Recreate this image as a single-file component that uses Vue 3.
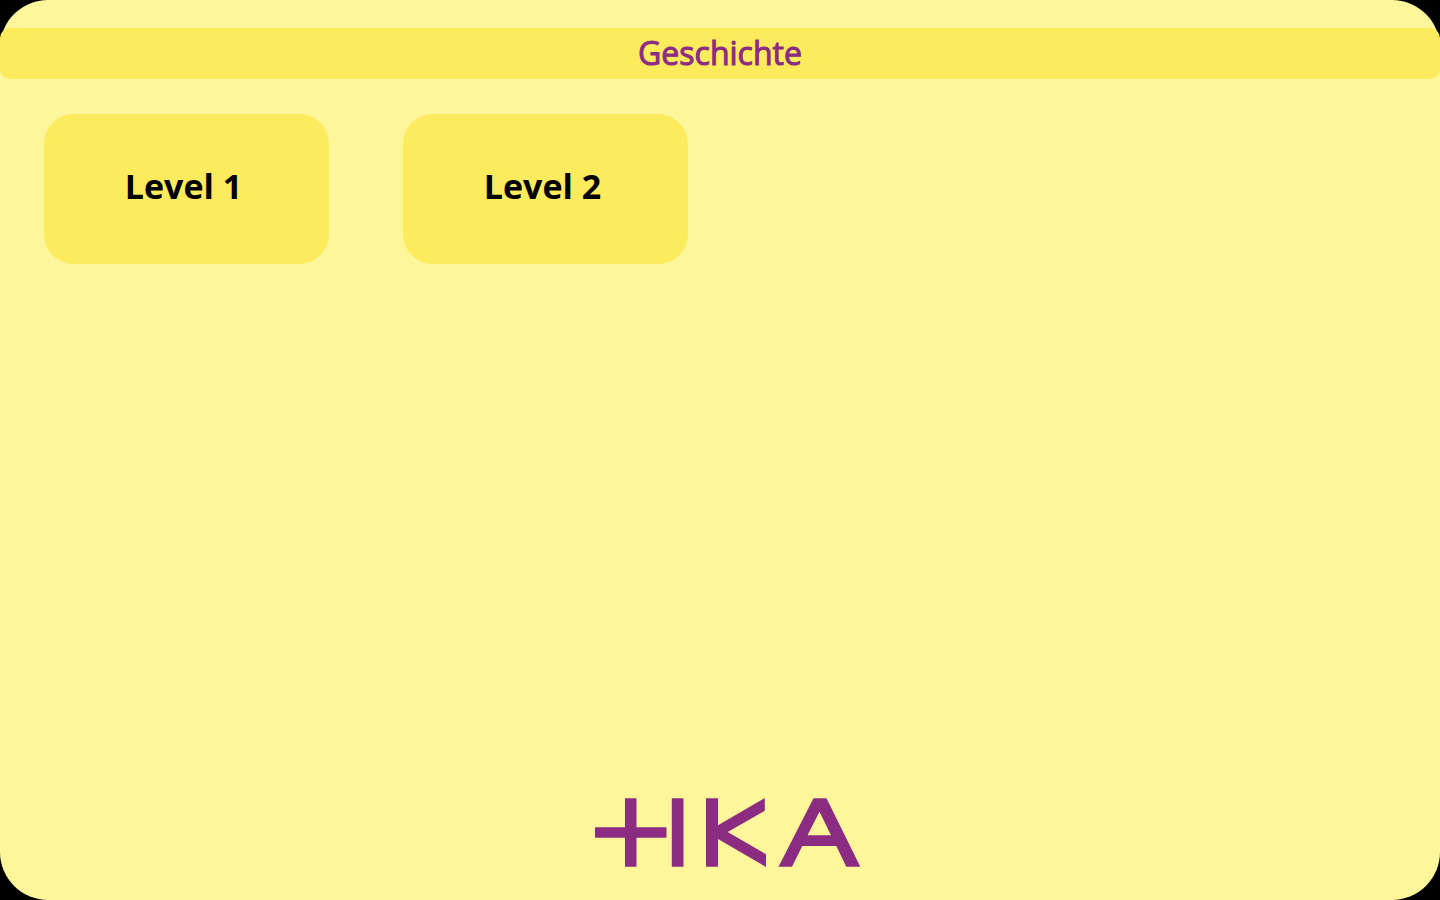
<script setup>
const levels = ['Level 1', 'Level 2']
</script>

<template>
  <main class="screen">
    <header class="bar">
      <h1 class="title">Geschichte</h1>
    </header>
    <section class="levels">
      <button v-for="level in levels" :key="level" type="button" class="level">{{ level }}</button>
    </section>
    <footer class="footer">
      <svg class="logo" viewBox="0 0 266 70" role="img" aria-label="HKA">
        <rect x="30" y="0.3" width="11.5" height="68.5" rx="0.5" />
        <rect x="0" y="29.2" width="71.5" height="10.5" rx="0.5" />
        <rect x="76.8" y="0.3" width="11.7" height="68.5" rx="0.5" />
        <path d="M111 .3H123V27.2L169.8 0V12.8L132.7 34L171 56.2V69L123 41V68.8H111Z" />
        <path fill-rule="evenodd" d="M218.5 .3H231.5L265.3 68.8H251.3L241.3 48H207.3L197 68.8H183.5ZM224.5 13.7L212.5 37.2H236Z" />
      </svg>
    </footer>
  </main>
</template>

<style>
body {
  margin: 0;
  background: #000;
}
</style>

<style scoped>
.screen {
  box-sizing: border-box;
  min-height: 100vh;
  padding: 28px 0 32px;
  display: flex;
  flex-direction: column;
  border-radius: 48px;
  background: #fff59b;
  font-family: "Open Sans", "Noto Sans", sans-serif;
}
.bar {
  border-radius: 10px;
  background: #fceb5d;
  text-align: center;
}
.title {
  margin: 0;
  padding-bottom: 1px;
  color: #8b2c82;
  font-size: 32px;
  line-height: 50px;
  font-weight: 500;
  -webkit-text-stroke: 1px #8b2c82;
}
.levels {
  display: flex;
  flex-wrap: wrap;
  gap: 74px;
  padding: 35px 44px;
}
.level {
  width: 285px;
  height: 150px;
  padding: 0 6px 6px 0;
  border: 0;
  border-radius: 30px;
  background: #fceb5d;
  color: #000;
  font: inherit;
  font-size: 34px;
  font-weight: 700;
  cursor: pointer;
}
.footer {
  display: flex;
  justify-content: center;
  margin-top: auto;
  padding-left: 16px;
}
.logo {
  width: 266px;
  height: 70px;
  fill: #8b2c82;
}
</style>
